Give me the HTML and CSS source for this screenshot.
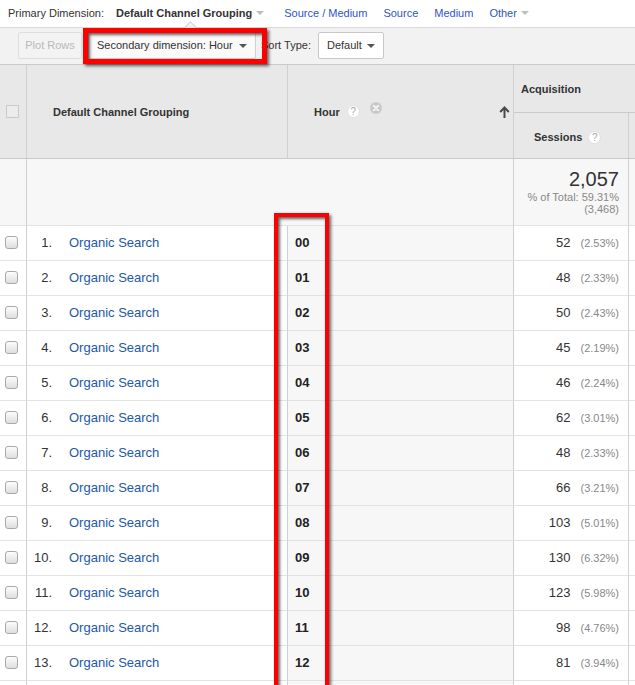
FILE: index.html
```html
<!DOCTYPE html>
<html>
<head>
<meta charset="utf-8">
<link rel="stylesheet" href="styles.css">
</head>
<body>
<div class="topbar">
  <span class="label">Primary Dimension:</span>
  <span class="current">Default Channel Grouping</span><span class="tri tri-light"></span>
  <a class="dim first">Source / Medium</a>
  <a class="dim">Source</a>
  <a class="dim">Medium</a>
  <a class="dim">Other</a><span class="tri tri-light"></span>
</div>
<div class="toolbar">
  <span class="notch"></span>
  <button class="btn plot">Plot Rows</button>
  <div class="btn select secondary"><span>Secondary dimension: Hour</span><span class="tri"></span></div>
  <span class="sortlabel">Sort Type:</span>
  <div class="btn select sort"><span>Default</span><span class="tri"></span></div>
</div>
<table class="report">
  <colgroup>
    <col class="c-check"><col class="c-name"><col class="c-hour"><col class="c-sess"><col class="c-rest">
  </colgroup>
  <thead>
    <tr class="h1">
      <th rowspan="2" class="th-check"><span class="hbox"></span></th>
      <th rowspan="2" class="th-name">Default Channel Grouping</th>
      <th rowspan="2" class="th-hour">
        <div class="hour-head">
          <span>Hour</span>
          <span class="help">?</span>
          <span class="remove"><svg width="12" height="12" viewBox="0 0 12 12"><path d="M3.8 3.8 L8.2 8.2 M8.2 3.8 L3.8 8.2" stroke="#fff" stroke-width="1.6" stroke-linecap="round"/></svg></span>
          <span class="sortarrow"><svg width="11" height="12" viewBox="0 0 11 12"><path d="M5.5 12 V2 M1.2 6 L5.5 1.5 L9.8 6" fill="none" stroke="#4a4a4a" stroke-width="2"/></svg></span>
        </div>
      </th>
      <th colspan="2" class="th-acq">Acquisition</th>
    </tr>
    <tr class="h2">
      <th class="th-sess">Sessions<span class="help">?</span></th>
      <th class="th-rest"></th>
    </tr>
  </thead>
  <tbody>
    <tr class="totals">
      <td></td>
      <td colspan="2"></td>
      <td class="tot">
        <div class="big">2,057</div>
        <div class="small">% of Total: 59.31%</div>
        <div class="small">(3,468)</div>
      </td>
      <td></td>
    </tr>
    <tr><td class="cb"><span class="box"></span></td><td class="name"><span class="num">1.</span><a>Organic Search</a></td><td class="hr">00</td><td class="val">52<span class="pct">(2.53%)</span></td><td></td></tr>
    <tr><td class="cb"><span class="box"></span></td><td class="name"><span class="num">2.</span><a>Organic Search</a></td><td class="hr">01</td><td class="val">48<span class="pct">(2.33%)</span></td><td></td></tr>
    <tr><td class="cb"><span class="box"></span></td><td class="name"><span class="num">3.</span><a>Organic Search</a></td><td class="hr">02</td><td class="val">50<span class="pct">(2.43%)</span></td><td></td></tr>
    <tr><td class="cb"><span class="box"></span></td><td class="name"><span class="num">4.</span><a>Organic Search</a></td><td class="hr">03</td><td class="val">45<span class="pct">(2.19%)</span></td><td></td></tr>
    <tr><td class="cb"><span class="box"></span></td><td class="name"><span class="num">5.</span><a>Organic Search</a></td><td class="hr">04</td><td class="val">46<span class="pct">(2.24%)</span></td><td></td></tr>
    <tr><td class="cb"><span class="box"></span></td><td class="name"><span class="num">6.</span><a>Organic Search</a></td><td class="hr">05</td><td class="val">62<span class="pct">(3.01%)</span></td><td></td></tr>
    <tr><td class="cb"><span class="box"></span></td><td class="name"><span class="num">7.</span><a>Organic Search</a></td><td class="hr">06</td><td class="val">48<span class="pct">(2.33%)</span></td><td></td></tr>
    <tr><td class="cb"><span class="box"></span></td><td class="name"><span class="num">8.</span><a>Organic Search</a></td><td class="hr">07</td><td class="val">66<span class="pct">(3.21%)</span></td><td></td></tr>
    <tr><td class="cb"><span class="box"></span></td><td class="name"><span class="num">9.</span><a>Organic Search</a></td><td class="hr">08</td><td class="val">103<span class="pct">(5.01%)</span></td><td></td></tr>
    <tr><td class="cb"><span class="box"></span></td><td class="name"><span class="num">10.</span><a>Organic Search</a></td><td class="hr">09</td><td class="val">130<span class="pct">(6.32%)</span></td><td></td></tr>
    <tr><td class="cb"><span class="box"></span></td><td class="name"><span class="num">11.</span><a>Organic Search</a></td><td class="hr">10</td><td class="val">123<span class="pct">(5.98%)</span></td><td></td></tr>
    <tr><td class="cb"><span class="box"></span></td><td class="name"><span class="num">12.</span><a>Organic Search</a></td><td class="hr">11</td><td class="val">98<span class="pct">(4.76%)</span></td><td></td></tr>
    <tr><td class="cb"><span class="box"></span></td><td class="name"><span class="num">13.</span><a>Organic Search</a></td><td class="hr">12</td><td class="val">81<span class="pct">(3.94%)</span></td><td></td></tr>
    <tr class="next"><td></td><td></td><td class="hr"></td><td></td><td></td></tr>
  </tbody>
</table>
<div class="highlight hl-secondary"></div>
<div class="highlight hl-hour"></div>
</body>
</html>
```
FILE: styles.css
```css
* { box-sizing: border-box; }
html, body { margin: 0; padding: 0; }
body {
  width: 635px;
  height: 685px;
  overflow: hidden;
  position: relative;
  background: #fff;
  font-family: "Liberation Sans", Arial, sans-serif;
  color: #333;
}

/* top bar */
.topbar {
  height: 28px;
  border-bottom: 1px solid #d9d9d9;
  padding: 0 0 2px 8px;
  display: flex;
  align-items: center;
  font-size: 11px;
  white-space: nowrap;
}
.topbar .label { color: #333; }
.topbar .current { margin-left: 12px; font-weight: bold; color: #333; }
.topbar .dim { color: #2d55c8; margin-left: 16px; }
.topbar .dim.first { margin-left: 20px; }
.tri {
  display: inline-block;
  width: 0; height: 0;
  border-left: 4px solid transparent;
  border-right: 4px solid transparent;
  border-top: 4px solid #555;
}
.tri-light { border-top-color: #bdbdbd; margin-left: 4px; }

/* toolbar */
.toolbar {
  position: relative;
  height: 36px;
  background: #f2f2f2;
  padding: 4px 0 0 18px;
  display: flex;
  align-items: flex-start;
  font-size: 11px;
}
.notch {
  position: absolute;
  left: 186px;
  top: -5px;
  width: 9px;
  height: 9px;
  background: #f2f2f2;
  border-left: 1px solid #cfcfcf;
  border-top: 1px solid #cfcfcf;
  transform: rotate(45deg);
}
.btn {
  height: 27px;
  border: 1px solid #d0d0d0;
  border-radius: 2px;
  font-family: inherit;
  font-size: 11px;
  line-height: 25px;
}
.plot {
  width: 64px;
  padding: 0;
  color: #b9b9b9;
  background: #f3f3f3;
  border-color: #dedede;
}
.select {
  display: flex;
  align-items: center;
  justify-content: space-between;
  background: #fafafa;
  color: #333;
  padding: 0 8px;
}
.secondary { width: 168px; margin-left: 6px; }
.sortlabel { margin-left: 5px; line-height: 27px; color: #333; }
.sort { width: 66px; margin-left: 7px; background: #fff; border-color: #c8c8c8; }

/* table */
.report {
  border-collapse: separate;
  border-spacing: 0;
  table-layout: fixed;
  width: 660px;
  border-top: 1px solid #cacaca;
  font-size: 11px;
}
.c-check { width: 27px; }
.c-name { width: 261px; }
.c-hour { width: 226px; }
.c-sess { width: 115px; }
.c-rest { width: 31px; }
.report th, .report td {
  padding: 0;
  border-right: 1px solid #d0d0d0;
  border-bottom: 1px solid #e2e2e2;
  white-space: nowrap;
}
.report th {
  background: #e8e8e8;
  border-bottom-color: #cacaca;
  font-weight: bold;
  color: #333;
  text-align: left;
}
.h1 { height: 48px; }
.h2 { height: 46px; }
.th-check { padding-left: 6px !important; }
.hbox {
  display: block;
  width: 13px;
  height: 13px;
  border: 1px solid #c9c9c9;
  background: #ececec;
}
.th-name { padding-left: 26px !important; }
.th-hour { padding-left: 26px !important; }
.hour-head { display: flex; align-items: center; }
.help {
  display: inline-flex;
  align-items: center;
  justify-content: center;
  width: 13px;
  height: 13px;
  border-radius: 50%;
  background: #fff;
  border: 1px solid #e0e0e0;
  color: #a8a8a8;
  font-size: 10px;
  font-weight: normal;
  margin-left: 7px;
}
.remove {
  display: inline-flex;
  width: 12px;
  height: 12px;
  border-radius: 50%;
  background: #cacaca;
  margin-left: 10px;
  margin-bottom: 8px;
}
.sortarrow { margin-left: auto; margin-right: 3px; display: inline-flex; }
.th-acq { padding-left: 7px !important; }
.th-sess { padding: 4px 0 0 20px !important; }
.th-sess .help { margin-left: 6px; vertical-align: middle; }

.totals { height: 67px; }
.totals td { background: #f7f7f7; vertical-align: top; }
.tot { text-align: right; padding: 8px 9px 0 0 !important; }
.tot .big { font-size: 20px; line-height: 24px; color: #333; }
.tot .small { font-size: 11px; line-height: 12px; color: #888; }

tbody tr { height: 35px; }
tbody td { padding-bottom: 2px !important; }
.totals td { padding-bottom: 0 !important; }
.cb { padding-left: 5px !important; }
.box {
  display: block;
  width: 13px;
  height: 13px;
  border: 1px solid #a9a9a9;
  border-radius: 3px;
  background: linear-gradient(#fdfdfd, #dedede);
}
.name { font-size: 13px; }
.num {
  display: inline-block;
  width: 25px;
  text-align: right;
  margin-right: 17px;
  color: #333;
}
.name a { color: #2358a8; }
.hr {
  background: #f7f7f7;
  padding-left: 7px !important;
  font-size: 13px;
  font-weight: bold;
  color: #222;
}
.val {
  text-align: right;
  padding-right: 9px !important;
  font-size: 13px;
  color: #333;
}
.pct { font-size: 11px; color: #888; margin-left: 10px; }

/* annotation boxes */
.highlight {
  position: absolute;
  border: 5px solid #ff0000;
  box-shadow: 2px 2px 3px rgba(0,0,0,0.6), inset 2px 2px 3px rgba(0,0,0,0.6);
}
.hl-secondary { left: 83px; top: 28px; width: 184px; height: 36px; }
.hl-hour { left: 274px; top: 213px; width: 55px; height: 500px; border-width: 4px; }
```
